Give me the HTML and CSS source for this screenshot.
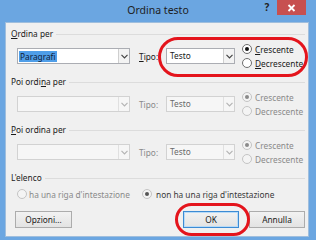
FILE: index.html
```html
<!DOCTYPE html>
<html lang="it">
<head>
<meta charset="utf-8">
<title>Ordina testo</title>
<link rel="stylesheet" href="styles.css">
</head>
<body>
<div class="window">
  <div class="titlebar">
    <div></div>
    <div class="title">Ordina testo</div>
    <div class="caption-buttons">
      <div class="help">?</div>
      <div class="close"><svg width="9" height="8" viewBox="0 0 9 8"><path d="M1.5 1 L7.5 7 M7.5 1 L1.5 7" stroke="#fff" stroke-width="1.8" fill="none"/></svg></div>
    </div>
  </div>
  <div class="client">
    <section class="group">
      <div class="group-head"><span class="label"><u>O</u>rdina per</span></div>
      <div class="row">
        <div class="combo combo-main"><span class="value"><span class="sel">Paragrafi</span></span><span class="arrow"><svg width="7" height="5" viewBox="0 0 7 5"><path d="M0.5 0.8 L3.5 3.8 L6.5 0.8" stroke="#444" stroke-width="1.2" fill="none"/></svg></span></div>
        <span class="tipo"><u>T</u>ipo:</span>
        <div class="combo combo-type"><span class="value">Testo</span><span class="arrow"><svg width="7" height="5" viewBox="0 0 7 5"><path d="M0.5 0.8 L3.5 3.8 L6.5 0.8" stroke="#444" stroke-width="1.2" fill="none"/></svg></span></div>
        <div class="radios">
          <label class="radio"><span class="dot checked"></span><span><u>C</u>rescente</span></label>
          <label class="radio"><span class="dot"></span><span><u>D</u>ecrescente</span></label>
        </div>
      </div>
    </section>
    <section class="group">
      <div class="group-head"><span class="label">Poi ordi<u>n</u>a per</span></div>
      <div class="row disabled">
        <div class="combo combo-main"><span class="value"></span><span class="arrow"><svg width="7" height="5" viewBox="0 0 7 5"><path d="M0.5 0.8 L3.5 3.8 L6.5 0.8" stroke="#b4b4b4" stroke-width="1.2" fill="none"/></svg></span></div>
        <span class="tipo">Tipo:</span>
        <div class="combo combo-type"><span class="value">Testo</span><span class="arrow"><svg width="7" height="5" viewBox="0 0 7 5"><path d="M0.5 0.8 L3.5 3.8 L6.5 0.8" stroke="#b4b4b4" stroke-width="1.2" fill="none"/></svg></span></div>
        <div class="radios">
          <label class="radio"><span class="dot checked"></span><span>Crescente</span></label>
          <label class="radio"><span class="dot"></span><span>Decrescente</span></label>
        </div>
      </div>
    </section>
    <section class="group">
      <div class="group-head"><span class="label"><u>P</u>oi ordina per</span></div>
      <div class="row disabled">
        <div class="combo combo-main"><span class="value"></span><span class="arrow"><svg width="7" height="5" viewBox="0 0 7 5"><path d="M0.5 0.8 L3.5 3.8 L6.5 0.8" stroke="#b4b4b4" stroke-width="1.2" fill="none"/></svg></span></div>
        <span class="tipo">Tipo:</span>
        <div class="combo combo-type"><span class="value">Testo</span><span class="arrow"><svg width="7" height="5" viewBox="0 0 7 5"><path d="M0.5 0.8 L3.5 3.8 L6.5 0.8" stroke="#b4b4b4" stroke-width="1.2" fill="none"/></svg></span></div>
        <div class="radios">
          <label class="radio"><span class="dot checked"></span><span>Crescente</span></label>
          <label class="radio"><span class="dot"></span><span>Decrescente</span></label>
        </div>
      </div>
    </section>
    <section class="group">
      <div class="group-head"><span class="label">L'elenco</span></div>
      <div class="list-row">
        <label class="radio radio-first disabled"><span class="dot"></span><span>ha una riga d'intestazione</span></label>
        <label class="radio radio-second"><span class="dot checked"></span><span>non ha una riga d'intestazione</span></label>
      </div>
    </section>
    <div class="buttons">
      <button class="btn btn-options">Opzioni...</button>
      <div class="spacer"></div>
      <button class="btn btn-default">OK</button>
      <button class="btn">Annulla</button>
    </div>
  </div>
  <div class="mark mark-tipo"></div>
  <div class="mark mark-ok"></div>
</div>
</body>
</html>
```
FILE: styles.css
```css
* { box-sizing: border-box; }
html, body { margin: 0; padding: 0; }
body {
  width: 316px;
  height: 240px;
  overflow: hidden;
  font-family: "Noto Sans", "Open Sans", sans-serif;
  font-size: 8.3px;
  color: #1a1a1a;
}
.window {
  position: relative;
  width: 316px;
  height: 240px;
  background: #6ba6e1;
  display: flex;
  flex-direction: column;
}
.titlebar {
  height: 22px;
  display: grid;
  grid-template-columns: 1fr auto 1fr;
  align-items: start;
}
.title {
  font-size: 10.5px;
  line-height: 11px;
  color: #1d1d1d;
  padding-top: 5px;
}
.caption-buttons {
  display: flex;
  justify-content: flex-end;
  padding-right: 10px;
}
.help {
  width: 20px;
  height: 15px;
  text-align: center;
  font-size: 10px;
  font-weight: bold;
  line-height: 15px;
  color: #222;
}
.close {
  width: 29px;
  height: 15px;
  background: #c75050;
  display: flex;
  align-items: center;
  justify-content: center;
}
.client {
  flex: 1;
  margin: 0 7px 3px 5px;
  background: #f0f0f0;
  border: 1px solid #9fbedd;
  padding: 5px 3px 8px 5px;
  display: flex;
  flex-direction: column;
}
.group + .group { margin-top: 8px; }
.group-head {
  height: 12px;
  display: flex;
  align-items: center;
  gap: 3px;
}
.group-head::after {
  content: "";
  flex: 1;
  border-top: 1px solid #dcdcdc;
}
.label { line-height: 12px; white-space: nowrap; }
.row {
  margin-top: 4px;
  height: 24px;
  padding-left: 6px;
  display: flex;
  align-items: center;
}
.combo {
  height: 16px;
  border: 1px solid #abadb3;
  background: #fff;
  display: flex;
  align-items: stretch;
}
.combo-main { width: 113px; }
.combo-type { width: 69px; }
.value {
  flex: 1;
  display: flex;
  align-items: center;
  padding-left: 3px;
  line-height: 12px;
}
.sel {
  background: #4f9ee8;
  color: #0f2038;
  padding: 0 1px;
  margin-left: -2px;
  line-height: 11px;
}
.arrow {
  width: 11px;
  border-left: 1px solid #cfcfcf;
  background: #f3f3f3;
  display: flex;
  align-items: center;
  justify-content: center;
}
.tipo {
  width: 27px;
  margin-left: 9px;
}
.radios {
  margin-left: 7px;
  display: flex;
  flex-direction: column;
}
.radio {
  height: 14px;
  display: flex;
  align-items: center;
  gap: 3px;
  white-space: nowrap;
}
.dot {
  width: 10px;
  height: 10px;
  border-radius: 50%;
  border: 1px solid #6e6e6e;
  background: #fff;
  display: flex;
  align-items: center;
  justify-content: center;
  flex: none;
}
.dot.checked::after {
  content: "";
  width: 4px;
  height: 4px;
  border-radius: 50%;
  background: #111;
}
.disabled { color: #8a8a8a; }
.disabled .combo { border-color: #d2d2d2; background: #f6f6f6; }
.disabled .combo .value { color: #6a6a6a; }
.disabled .arrow { border-left-color: #e0e0e0; background: #f6f6f6; }
.disabled .dot { border-color: #c4c4c4; background: #f4f4f4; }
.disabled .dot.checked::after { background: #8a8a8a; }
.list-row {
  margin-top: 4px;
  height: 12px;
  padding-left: 6px;
  display: flex;
  align-items: center;
}
.radio-first { width: 125px; gap: 2px; }
.radio-second { color: #3a3a3a; gap: 4px; }
.radio-second .dot { border-color: #c4c4c4; background: #f4f4f4; }
.radio-second .dot.checked::after { background: #555; }
.buttons {
  margin-top: 11px;
  height: 17px;
  padding-left: 4px;
  display: flex;
  gap: 10px;
}
.spacer { flex: 1; }
.btn {
  width: 56px;
  height: 17px;
  padding: 0;
  font-family: inherit;
  font-size: 8.3px;
  color: #1a1a1a;
  background: linear-gradient(#f2f2f2, #e3e3e3);
  border: 1px solid #acacac;
  border-radius: 0;
}
.btn-options { width: 57px; }
.btn-default { border-color: #3c8bd4; box-shadow: inset 0 0 0 1px #b9dbf7; }
.mark {
  position: absolute;
  border: 3px solid #e4141c;
}
.mark-tipo {
  left: 158px;
  top: 37px;
  width: 150px;
  height: 40px;
  border-radius: 20px;
}
.mark-ok {
  left: 175px;
  top: 203px;
  width: 75px;
  height: 33px;
  border-radius: 17px;
}
```
